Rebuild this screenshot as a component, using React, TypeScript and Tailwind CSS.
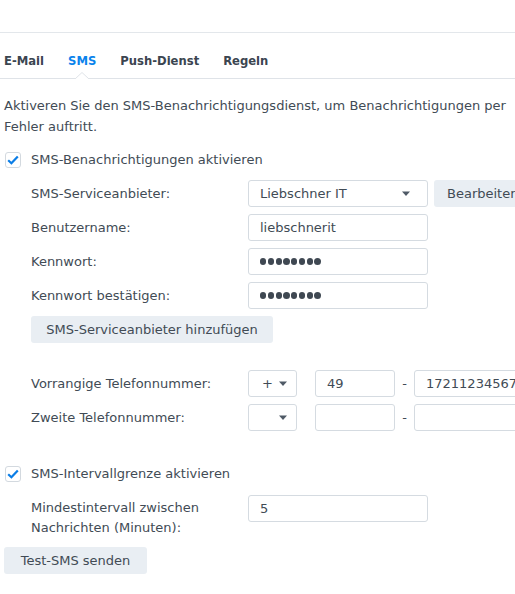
import React from "react";

const Caret = () => (
  <svg width="10" height="6" viewBox="0 0 10 6" className="shrink-0">
    <path d="M1 0.5 L9 0.5 L5 5 Z" fill="#4f5a66" />
  </svg>
);

const Check = () => (
  <div className="w-[16px] h-[16px] rounded-[3px] border border-[#d3d9df] bg-white flex items-center justify-center shrink-0">
    <svg width="12" height="10" viewBox="0 0 12 10">
      <path d="M1.2 5.2 L4.4 8.2 L10.8 1.4" fill="none" stroke="#0a7de6" strokeWidth="2.2" />
    </svg>
  </div>
);

const Input = ({ children, className = "" }: { children?: React.ReactNode; className?: string }) => (
  <div className={"h-[27px] border border-[#d5dbe1] rounded-[3px] bg-white flex items-center px-[11px] shrink-0 " + className}>
    {children}
  </div>
);

const Dots = () => (
  <div className="flex gap-[1.6px]">
    {Array.from({ length: 8 }).map((_, i) => (
      <div key={i} className="w-[6.2px] h-[6.2px] rounded-full bg-[#3f4852]" />
    ))}
  </div>
);

const Row = ({ label, children }: { label: string; children: React.ReactNode }) => (
  <div className="flex items-center h-[27px]">
    <div className="w-[217px] shrink-0">{label}</div>
    {children}
  </div>
);

export default function App() {
  return (
    <div
      className="w-[515px] h-[594px] overflow-hidden bg-white text-[13px] text-[#414b55] whitespace-nowrap"
      style={{ fontFamily: '"DejaVu Sans", Verdana, sans-serif' }}
    >
      <div className="h-[33px] border-b border-[#e3e7eb]" />
      <div className="relative h-[46px] border-b border-[#dfe3e8] flex gap-[24px] pl-[4px] pt-[21px] font-bold text-[11.6px] leading-[14px] text-[#3b4550]">
        <span>E-Mail</span>
        <span className="text-[#0a83ec]">SMS</span>
        <span>Push-Dienst</span>
        <span>Regeln</span>
        <svg width="14" height="7" viewBox="0 0 14 7" className="absolute left-[75px] bottom-[-1px]">
          <path d="M0 7 L7 0.5 L14 7" fill="#ffffff" stroke="#dfe3e8" strokeWidth="1" />
        </svg>
      </div>
      <div className="pl-[4px] pt-[16px] leading-[21px] overflow-hidden">
        <div>Aktiveren Sie den SMS-Benachrichtigungsdienst, um Benachrichtigungen per</div>
        <div>Fehler auftritt.</div>
      </div>
      <div className="flex items-center gap-[10px] pl-[5px] mt-[13px] h-[20px]">
        <Check />
        <span>SMS-Benachrichtigungen aktivieren</span>
      </div>
      <div className="pl-[31px] mt-[10px] flex flex-col gap-[7px]">
        <Row label="SMS-Serviceanbieter:">
          <Input className="w-[180px] justify-between pr-[16px]">
            <span>Liebschner IT</span>
            <Caret />
          </Input>
          <div className="ml-[6px] h-[27px] px-[13px] rounded-[3px] bg-[#e9eef3] flex items-center shrink-0">Bearbeiten</div>
        </Row>
        <Row label="Benutzername:">
          <Input className="w-[180px]">liebschnerit</Input>
        </Row>
        <Row label="Kennwort:">
          <Input className="w-[180px]">
            <Dots />
          </Input>
        </Row>
        <Row label="Kennwort bestätigen:">
          <Input className="w-[180px]">
            <Dots />
          </Input>
        </Row>
        <div className="h-[27px] w-[242px] rounded-[3px] bg-[#e9eef3] flex items-center justify-center">
          SMS-Serviceanbieter hinzufügen
        </div>
      </div>
      <div className="pl-[31px] mt-[27px] flex flex-col gap-[7px]">
        <Row label="Vorrangige Telefonnummer:">
          <Input className="w-[49px] justify-between pl-[13px] pr-[8px]">
            <span>+</span>
            <Caret />
          </Input>
          <Input className="ml-[18px] w-[80px] pl-[11px]">49</Input>
          <div className="w-[19px] text-center shrink-0">-</div>
          <Input className="w-[180px]">17211234567</Input>
        </Row>
        <Row label="Zweite Telefonnummer:">
          <Input className="w-[49px] justify-end pr-[8px]">
            <Caret />
          </Input>
          <Input className="ml-[18px] w-[80px]" />
          <div className="w-[19px] text-center shrink-0">-</div>
          <Input className="w-[180px]" />
        </Row>
      </div>
      <div className="flex items-center gap-[10px] pl-[5px] mt-[33px] h-[20px]">
        <Check />
        <span>SMS-Intervallgrenze aktivieren</span>
      </div>
      <div className="pl-[31px] mt-[11px] flex">
        <div className="w-[217px] shrink-0 leading-[20px] pt-[3px]">
          <div>Mindestintervall zwischen</div>
          <div>Nachrichten (Minuten):</div>
        </div>
        <Input className="w-[180px]">5</Input>
      </div>
      <div className="pl-[4px] mt-[9px]">
        <div className="h-[27px] w-[143px] rounded-[3px] bg-[#e9eef3] flex items-center justify-center">Test-SMS senden</div>
      </div>
    </div>
  );
}
